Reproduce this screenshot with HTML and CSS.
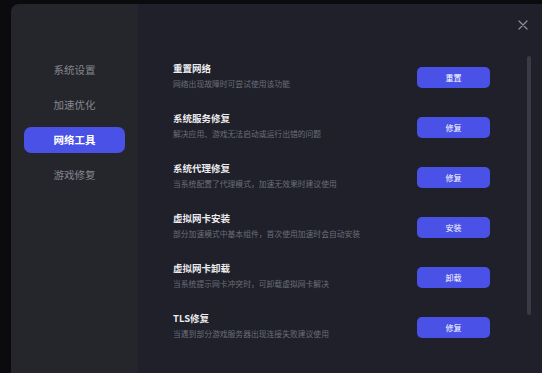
FILE: index.html
```html
<!DOCTYPE html>
<html lang="zh-CN">
<head>
    <meta charset="UTF-8">
    <meta name="viewport" content="width=device-width, initial-scale=1.0">
    <title>设置 - 网络工具</title>
    <link rel="stylesheet" href="styles.css">
</head>
<body>
    <div class="settings-window">
        <aside class="side-nav">
            <div class="nav-item">系统设置</div>
            <div class="nav-item">加速优化</div>
            <div class="nav-item active">网络工具</div>
            <div class="nav-item">游戏修复</div>
        </aside>

        <main class="tool-panel">
            <button class="close-btn" aria-label="关闭">
                <svg width="10" height="10" viewBox="0 0 10 10">
                    <path d="M1 1 L9 9 M9 1 L1 9" stroke="#8a8c96" stroke-width="1.3" stroke-linecap="round"/>
                </svg>
            </button>

            <div class="tool-list">
                <div class="tool-row">
                    <div class="tool-info">
                        <div class="tool-title">重置网络</div>
                        <div class="tool-desc">网络出现故障时可尝试使用该功能</div>
                    </div>
                    <button class="tool-btn">重置</button>
                </div>
                <div class="tool-row">
                    <div class="tool-info">
                        <div class="tool-title">系统服务修复</div>
                        <div class="tool-desc">解决应用、游戏无法启动或运行出错的问题</div>
                    </div>
                    <button class="tool-btn">修复</button>
                </div>
                <div class="tool-row">
                    <div class="tool-info">
                        <div class="tool-title">系统代理修复</div>
                        <div class="tool-desc">当系统配置了代理模式，加速无效果时建议使用</div>
                    </div>
                    <button class="tool-btn">修复</button>
                </div>
                <div class="tool-row">
                    <div class="tool-info">
                        <div class="tool-title">虚拟网卡安装</div>
                        <div class="tool-desc">部分加速模式中基本组件，首次使用加速时会自动安装</div>
                    </div>
                    <button class="tool-btn">安装</button>
                </div>
                <div class="tool-row">
                    <div class="tool-info">
                        <div class="tool-title">虚拟网卡卸载</div>
                        <div class="tool-desc">当系统提示网卡冲突时，可卸载虚拟网卡解决</div>
                    </div>
                    <button class="tool-btn">卸载</button>
                </div>
                <div class="tool-row">
                    <div class="tool-info">
                        <div class="tool-title">TLS修复</div>
                        <div class="tool-desc">当遇到部分游戏服务器出现连接失败建议使用</div>
                    </div>
                    <button class="tool-btn">修复</button>
                </div>
            </div>

            <div class="scroll-thumb"></div>
        </main>
    </div>
</body>
</html>
```

FILE: styles.css
```css
html, body {
    margin: 0;
    height: 100%;
    overflow: hidden;
}
body {
    font-family: "Noto Sans CJK SC", "Noto Sans", sans-serif;
    background: #0b0b0e;
    padding: 4px 0 0 11px;
    box-sizing: border-box;
}
.settings-window {
    display: flex;
    height: 100%;
    border-radius: 8px 0 0 0;
    overflow: hidden;
}
.side-nav {
    width: 127px;
    background: #25262c;
    padding: 53px 13px 0;
    box-sizing: border-box;
    display: flex;
    flex-direction: column;
    gap: 9px;
}
.nav-item {
    height: 26px;
    line-height: 26px;
    text-align: center;
    font-size: 10.5px;
    color: #85878f;
    border-radius: 7px;
}
.nav-item.active {
    background: #4a51e6;
    color: #fff;
    font-weight: 700;
}
.tool-panel {
    flex: 1;
    position: relative;
    background: #1f2029;
}
.tool-list {
    padding: 48px 52px 0 35px;
}
.tool-row {
    height: 50px;
    display: flex;
    align-items: center;
    justify-content: space-between;
}
.tool-info {
    padding-bottom: 4px;
}
.tool-title {
    font-size: 9.5px;
    font-weight: 700;
    color: #ececef;
    line-height: 14px;
}
.tool-desc {
    font-size: 7.8px;
    color: #6c6e79;
    line-height: 12px;
    margin-top: 3px;
}
.tool-btn {
    width: 73px;
    height: 21px;
    border: none;
    border-radius: 5px;
    background: #4a51e6;
    color: #fff;
    font-family: inherit;
    font-size: 8px;
    padding: 0;
    cursor: pointer;
}
.close-btn {
    position: absolute;
    top: 15px;
    right: 13px;
    width: 12px;
    height: 12px;
    padding: 0;
    border: none;
    background: none;
    display: flex;
    align-items: center;
    justify-content: center;
}
.scroll-thumb {
    position: absolute;
    top: 52px;
    right: 11px;
    width: 4px;
    height: 259px;
    border-radius: 2px;
    background: #393a46;
}
```
